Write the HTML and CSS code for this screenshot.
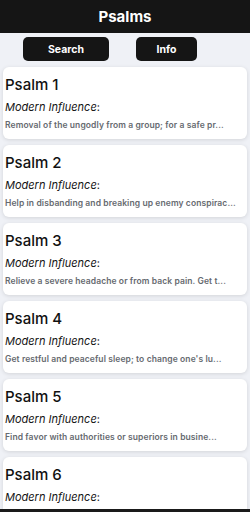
FILE: index.html
```html
<!DOCTYPE html>
<html lang="en">
<head>
    <meta charset="UTF-8">
    <meta name="viewport" content="width=device-width, initial-scale=1.0">
    <title>Psalms</title>
    <link rel="stylesheet" href="styles.css">
</head>
<body>

    <header class="topbar">Psalms</header>

    <div class="buttons">
        <button class="btn btn-search">Search</button>
        <button class="btn btn-info">Info</button>
    </div>

    <div class="list">
        <div class="card">
            <h3>Psalm 1</h3>
            <p class="label"><em>Modern Influence</em>:</p>
            <p class="desc">Removal of the ungodly from a group; for a safe pr...</p>
        </div>
        <div class="card">
            <h3>Psalm 2</h3>
            <p class="label"><em>Modern Influence</em>:</p>
            <p class="desc">Help in disbanding and breaking up enemy conspirac...</p>
        </div>
        <div class="card">
            <h3>Psalm 3</h3>
            <p class="label"><em>Modern Influence</em>:</p>
            <p class="desc">Relieve a severe headache or from back pain. Get t...</p>
        </div>
        <div class="card">
            <h3>Psalm 4</h3>
            <p class="label"><em>Modern Influence</em>:</p>
            <p class="desc">Get restful and peaceful sleep; to change one's lu...</p>
        </div>
        <div class="card">
            <h3>Psalm 5</h3>
            <p class="label"><em>Modern Influence</em>:</p>
            <p class="desc">Find favor with authorities or superiors in busine...</p>
        </div>
        <div class="card">
            <h3>Psalm 6</h3>
            <p class="label"><em>Modern Influence</em>:</p>
        </div>
    </div>

    <div class="bottom-line"></div>

</body>
</html>
```

FILE: styles.css
```css
body {
    font-family: 'Inter', 'Noto Sans', sans-serif;
    background-color: #eff1f6;
    color: #111;
    margin: 0;
    height: 512px;
    overflow: hidden;
}

.topbar {
    background-color: #151515;
    color: #ffffff;
    height: 33px;
    line-height: 33px;
    text-align: center;
    font-size: 15px;
    font-weight: 700;
}

/* Tombol atas */
.buttons {
    display: flex;
    gap: 27px;
    padding: 4px 0 0 23px;
    height: 24px;
}

.btn {
    background-color: #151515;
    color: #ffffff;
    border: none;
    border-radius: 5px;
    font-family: 'Inter', sans-serif;
    font-size: 10.5px;
    font-weight: 700;
    height: 24px;
    padding: 0;
}

.btn-search {
    width: 86px;
}

.btn-info {
    width: 61px;
}

.list {
    display: flex;
    flex-direction: column;
    gap: 6px;
    padding: 6px 3px 0 3px;
}

.card {
    background-color: #ffffff;
    border-radius: 6px;
    box-shadow: 0 1px 4px rgba(0, 0, 0, 0.12);
    padding: 8px 2px 0 2px;
    height: 64px;
}

.card h3 {
    margin: 0;
    font-size: 15px;
    font-weight: 500;
    line-height: 20px;
    color: #111;
}

.label {
    margin: 5px 0 0 0;
    font-size: 11px;
    line-height: 14px;
    color: #151515;
}

.desc {
    margin: 6px 0 0 0;
    font-size: 8.5px;
    font-weight: 600;
    letter-spacing: 0.1px;
    line-height: 11px;
    color: #666a70;
    white-space: nowrap;
}

.bottom-line {
    position: fixed;
    left: 0;
    right: 0;
    bottom: 0;
    height: 3px;
    background-color: #1a1a1a;
}
```
